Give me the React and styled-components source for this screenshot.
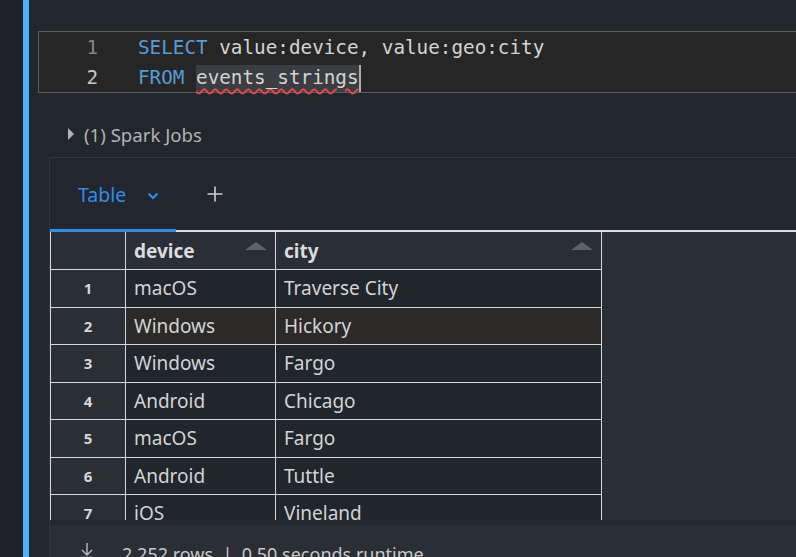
import React from "react";
import styled, { createGlobalStyle } from "styled-components";

const GlobalStyle = createGlobalStyle`
  html, body {
    margin: 0;
    padding: 0;
    background: #1e2127;
    overflow: hidden;
  }
`;

const Page = styled.div`
  display: flex;
  width: 796px;
  height: 557px;
  overflow: hidden;
  font-family: "Segoe UI", "Noto Sans", sans-serif;
`;

const Gutter = styled.div`
  width: 23px;
  flex-shrink: 0;
  background: #1f2228;
`;

const ActiveBar = styled.div`
  width: 6px;
  flex-shrink: 0;
  background: #4cb1f6;
`;

const Cell = styled.div`
  flex: 1;
  min-width: 0;
  display: flex;
  flex-direction: column;
  padding-top: 31px;
  background: #22262d;
`;

const Editor = styled.div`
  margin-left: 9px;
  border: 1px solid #5a5d62;
  border-right: none;
  background: #262626;
  font-family: "DejaVu Sans Mono", "Liberation Mono", monospace;
  font-size: 19.3px;
`;

const Line = styled.div`
  display: flex;
  align-items: center;
  height: 30px;
  white-space: pre;
`;

const LineNo = styled.span`
  width: 59px;
  text-align: right;
  color: ${(p) => (p.active ? "#c6c6c6" : "#858585")};
`;

const Code = styled.span`
  margin-left: 40px;
  color: #d4d4d4;
`;

const Keyword = styled.span`
  color: #569cd6;
`;

// selected identifier with squiggle and cursor
const Selected = styled.span`
  background: #3a3d41;
  padding: 1px 0 3px;
  border-right: 2px solid #aeafad;
  text-decoration: underline wavy #e5484d;
  text-decoration-thickness: 1.5px;
  text-underline-offset: 4px;
`;

const JobsRow = styled.div`
  display: flex;
  align-items: center;
  height: 30px;
  margin-top: 26px;
  padding-left: 39px;
  color: #b3b3b3;
  font-size: 18.6px;
`;

const Caret = styled.span`
  width: 0;
  height: 0;
  border-top: 6px solid transparent;
  border-bottom: 6px solid transparent;
  border-left: 6px solid #b3b3b3;
  margin-right: 10px;
`;

const Results = styled.div`
  flex: 1;
  min-height: 0;
  display: flex;
  flex-direction: column;
  margin-top: 8px;
  margin-left: 20px;
  border-top: 1px solid #33373e;
  border-left: 1px solid #31353c;
  background: #22262d;
`;

const TabBar = styled.div`
  display: flex;
  align-items: flex-start;
  height: 72px;
  border-bottom: 2px solid #dcdcdc;
  flex-shrink: 0;
`;

const Tab = styled.div`
  display: flex;
  align-items: center;
  box-sizing: border-box;
  width: 126px;
  height: 74px;
  padding: 2px 0 0 28px;
  border-bottom: 3px solid #2f8ee8;
  color: #2f8ee8;
  font-size: 19.5px;
`;

const Chevron = styled.svg`
  margin-left: 21px;
  margin-top: 2px;
`;

const AddTab = styled.div`
  display: flex;
  align-items: center;
  height: 72px;
  margin-left: 31px;
`;

const Body = styled.div`
  flex: 1;
  min-height: 0;
  display: flex;
  background: #2a2e36;
  overflow: hidden;
`;

const Grid = styled.table`
  border-collapse: collapse;
  table-layout: fixed;
  width: 552px;
  flex-shrink: 0;
  border-left: 1px solid #d7d7d7;
  align-self: flex-start;
`;

const HeadCell = styled.th`
  position: relative;
  height: 37px;
  padding: 0 0 0 8px;
  text-align: left;
  background: #2a2e36;
  color: #dcdcdc;
  font-size: 19px;
  font-weight: 700;
  border-right: 1px solid #d7d7d7;
  border-bottom: 1px solid #d7d7d7;
`;

const SortArrow = styled.span`
  position: absolute;
  right: 8px;
  top: 10px;
  width: 0;
  height: 0;
  border-left: 11px solid transparent;
  border-right: 11px solid transparent;
  border-bottom: 8px solid #5d6169;
`;

const NumCell = styled.td`
  height: 36.5px;
  padding: 0;
  text-align: center;
  background: #2a2e35;
  color: #d6d6d6;
  font-size: 15px;
  font-weight: 700;
  border-right: 1px solid #d7d7d7;
  border-bottom: 1px solid #d7d7d7;
`;

const DataCell = styled.td`
  height: 36.5px;
  padding: 0 0 0 8px;
  background: ${(p) => (p.hover ? "#2c2a28" : "#21252c")};
  color: #d4d4d4;
  font-size: 19px;
  white-space: nowrap;
  border-right: 1px solid #d7d7d7;
  border-bottom: 1px solid #d7d7d7;
`;

const Footer = styled.div`
  flex-shrink: 0;
  height: 37px;
  border-top: 5px solid #23272e;
  background: #2a2e35;
  display: flex;
  align-items: flex-start;
  padding: 17px 0 0 30px;
  box-sizing: border-box;
  color: #c8c8c8;
  font-size: 18px;
  gap: 28px;
`;

const rows = [
  ["macOS", "Traverse City"],
  ["Windows", "Hickory"],
  ["Windows", "Fargo"],
  ["Android", "Chicago"],
  ["macOS", "Fargo"],
  ["Android", "Tuttle"],
  ["iOS", "Vineland"],
  ["Windows", "Omaha"],
];

export default function App() {
  return (
    <>
      <GlobalStyle />
      <Page>
        <Gutter />
        <ActiveBar />
        <Cell>
          <Editor>
            <Line>
              <LineNo>1</LineNo>
              <Code>
                <Keyword>SELECT</Keyword> value:device, value:geo:city
              </Code>
            </Line>
            <Line>
              <LineNo active>2</LineNo>
              <Code>
                <Keyword>FROM</Keyword> <Selected>events_strings</Selected>
              </Code>
            </Line>
          </Editor>

          <JobsRow>
            <Caret />
            (1) Spark Jobs
          </JobsRow>

          <Results>
            <TabBar>
              <Tab>
                Table
                <Chevron width="12" height="8" viewBox="0 0 12 8">
                  <path d="M1.5 1.5 L6 6 L10.5 1.5" fill="none" stroke="#2f8ee8" strokeWidth="2" />
                </Chevron>
              </Tab>
              <AddTab>
                <svg width="16" height="16" viewBox="0 0 16 16">
                  <path d="M8 0.5 V15.5 M0.5 8 H15.5" stroke="#d0d0d0" strokeWidth="1.6" />
                </svg>
              </AddTab>
            </TabBar>
            <Body>
              <Grid>
                <colgroup>
                  <col style={{ width: 75 }} />
                  <col style={{ width: 150 }} />
                  <col style={{ width: 326 }} />
                </colgroup>
                <thead>
                  <tr>
                    <HeadCell />
                    <HeadCell>
                      device
                      <SortArrow />
                    </HeadCell>
                    <HeadCell>
                      city
                      <SortArrow />
                    </HeadCell>
                  </tr>
                </thead>
                <tbody>
                  {rows.map(([device, city], i) => (
                    <tr key={i}>
                      <NumCell>{i + 1}</NumCell>
                      <DataCell hover={i === 1}>{device}</DataCell>
                      <DataCell hover={i === 1}>{city}</DataCell>
                    </tr>
                  ))}
                </tbody>
              </Grid>
            </Body>
            <Footer>
              <svg width="14" height="16" viewBox="0 0 14 16">
                <path d="M7 1 V13 M2 8 L7 13 L12 8 M1 15.5 H13" fill="none" stroke="#bdbdbd" strokeWidth="1.4" />
              </svg>
              <span>2,252 rows &nbsp;|&nbsp; 0.50 seconds runtime</span>
            </Footer>
          </Results>
        </Cell>
      </Page>
    </>
  );
}
